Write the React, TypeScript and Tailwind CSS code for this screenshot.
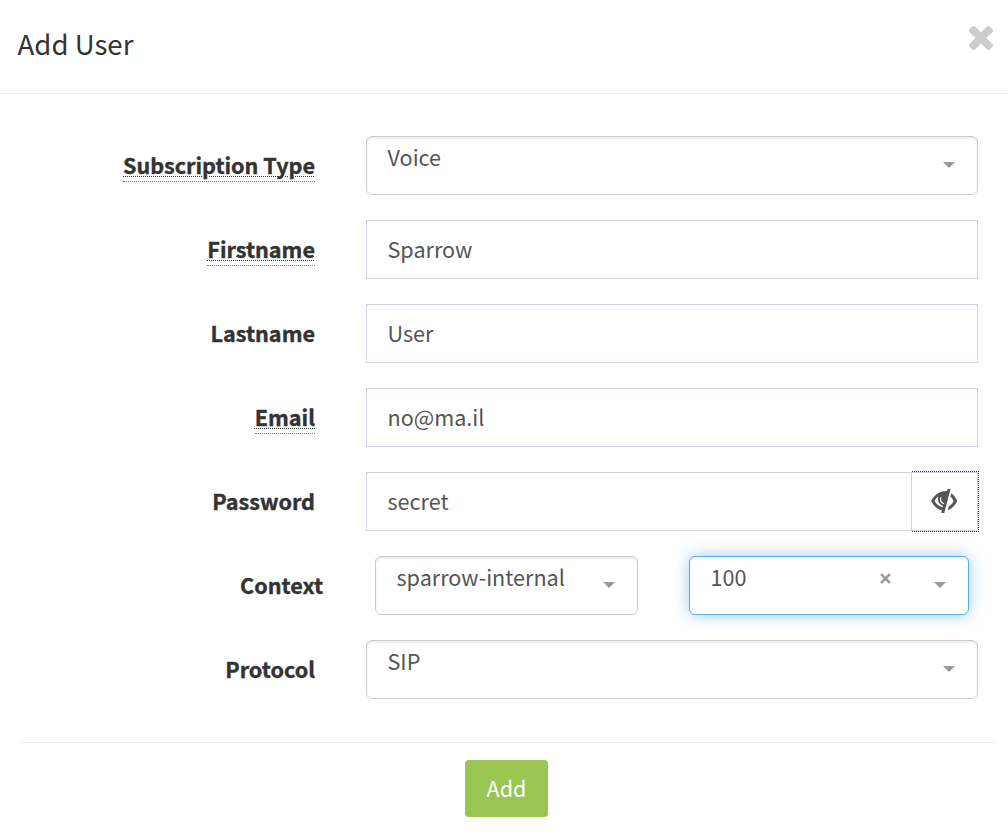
import React from "react";

function Label({ children, hint, width = "w-[315px]" }: { children: string; hint?: boolean; width?: string }) {
  return (
    <label className={`flex shrink-0 justify-end text-[21.6px] leading-[30px] font-bold text-[#333] [-webkit-text-stroke:0.4px_#333] ${width}`}>
      {hint ? (
        <abbr className="h-[32px] border-b border-dotted border-[#777] leading-[29px] underline decoration-[#333] decoration-dotted decoration-1 underline-offset-[2px]">
          {children}
        </abbr>
      ) : (
        <span className="h-[32px] leading-[29px]">{children}</span>
      )}
    </label>
  );
}

function Row({ children }: { children: React.ReactNode }) {
  return <div className="flex h-[59px] items-center">{children}</div>;
}

function TextBox({ value }: { value: string }) {
  return (
    <div className="ml-[51px] flex h-[59px] flex-1 items-center border border-[#cfd4e2] pb-[2px] pl-[20.5px] text-[21.6px] leading-[30px] text-[#555]">
      <span>{value}</span>
    </div>
  );
}

function Select({ value, className = "", focused, clearable }: { value: string; className?: string; focused?: boolean; clearable?: boolean }) {
  const look = focused
    ? "border-[#5eade9] shadow-[inset_0_1.5px_1.5px_rgba(0,0,0,0.075),0_0_15px_rgba(102,175,233,0.65)]"
    : "border-[#ccc] shadow-[inset_0_2px_2px_rgba(0,0,0,0.075)]";
  return (
    <div className={`flex h-[59px] items-start rounded-[6px] border bg-white pr-[22px] pl-[20.5px] ${look} ${className}`}>
      <span className="mt-[5px] flex-1 text-[21.6px] leading-[30px] text-[#555]">{value}</span>
      {clearable && (
        <svg className="mt-[16px] mr-[43px] h-[11px] w-[11px]" viewBox="0 0 11 11">
          <path d="M1.1 1.1L9.9 9.9M9.9 1.1L1.1 9.9" stroke="#999" strokeWidth="2.6" />
        </svg>
      )}
      <svg className="mt-[25px] h-[6px] w-[12px]" viewBox="0 0 12 6">
        <path d="M0 0H12L6 6Z" fill="#999" />
      </svg>
    </div>
  );
}

export default function App() {
  return (
    <div className="h-[834px] w-[1008px] overflow-hidden bg-white font-['Noto_Sans_CJK_SC','Noto_Sans',sans-serif]">
      <header className="flex h-[94px] items-start justify-between border-b border-[#f0f0f0] pr-[15.5px] pl-[17.5px]">
        <h1 className="mt-[23px] text-[27.6px] leading-[40px] text-[#333]">Add User</h1>
        <svg className="mt-[26px] h-[24px] w-[24px]" viewBox="110 -18 1188 1188">
          <path
            fill="#ccc"
            d="M1298 214q0 -40 -28 -68l-136 -136q-28 -28 -68 -28t-68 28l-294 294l-294 -294q-28 -28 -68 -28t-68 28l-136 136q-28 28 -28 68t28 68l294 294l-294 294q-28 28 -28 68t28 68l136 136q28 28 68 28t68 -28l294 -294l294 294q28 28 68 28t68 -28l136 -136q28 -28 28 -68t-28 -68l-294 -294l294 -294q28 -28 28 -68z"
          />
        </svg>
      </header>
      <form className="flex flex-col gap-[25px] pt-[42px] pr-[30px]">
        <Row>
          <Label hint>Subscription Type</Label>
          <Select value="Voice" className="ml-[51px] flex-1" />
        </Row>
        <Row>
          <Label hint>Firstname</Label>
          <TextBox value="Sparrow" />
        </Row>
        <Row>
          <Label>Lastname</Label>
          <TextBox value="User" />
        </Row>
        <Row>
          <Label hint>Email</Label>
          <TextBox value="no@ma.il" />
        </Row>
        <Row>
          <Label>Password</Label>
          <TextBox value="secret" />
          <button
            type="button"
            className="-ml-px flex h-[59px] w-[67px] items-start border border-[#cfd4e2] pt-[16px] pl-[19px] outline-1 outline-[#333] outline-dotted [clip-path:inset(-1px_-1px_-1px_0)]"
          >
            <svg className="h-[24px] w-[27px]" viewBox="0 0 27 24">
              <path d="M19.5 0L16.6 0L16 2C9.5 1.4 3.5 5.3 0.2 12C2.6 17 6.4 20.5 11 21.5L10.3 24H13.3Z" fill="#555" />
              <path d="M3.6 12C4.6 10 5.8 8.6 7.2 7.6C6.2 12 8.2 16 12 16.9L11.6 18.2C8.2 17.3 5.3 15.1 3.6 12Z" fill="#fff" />
              <path d="M10 8.2C8.8 11 9.8 13.8 12.8 14.6" fill="none" stroke="#fff" strokeWidth="1.2" />
              <path d="M20.3 4.2C22.8 6 24.8 8.6 26.3 12C24.1 16.4 21 19.8 16.8 21.2L17.7 17.5C19.8 16.2 21.5 14.5 22.7 12C21.8 10.2 20.8 8.8 19.4 7.5Z" fill="#555" />
            </svg>
          </button>
        </Row>
        <Row>
          <Label width="w-[323px]">Context</Label>
          <Select value="sparrow-internal" className="ml-[52px] w-[263px]" />
          <Select value="100" className="ml-[51px] w-[280px]" focused clearable />
        </Row>
        <Row>
          <Label>Protocol</Label>
          <Select value="SIP" className="ml-[51px] flex-1" />
        </Row>
      </form>
      <footer className="mt-[43px] mr-[13px] ml-[18px] flex justify-center border-t border-[#f0f0f0] pt-[17px]">
        <button type="button" className="h-[57px] w-[83px] rounded-[4px] bg-[#99c653] pb-[2px] text-[21.6px] leading-[30px] text-white">
          Add
        </button>
      </footer>
    </div>
  );
}
